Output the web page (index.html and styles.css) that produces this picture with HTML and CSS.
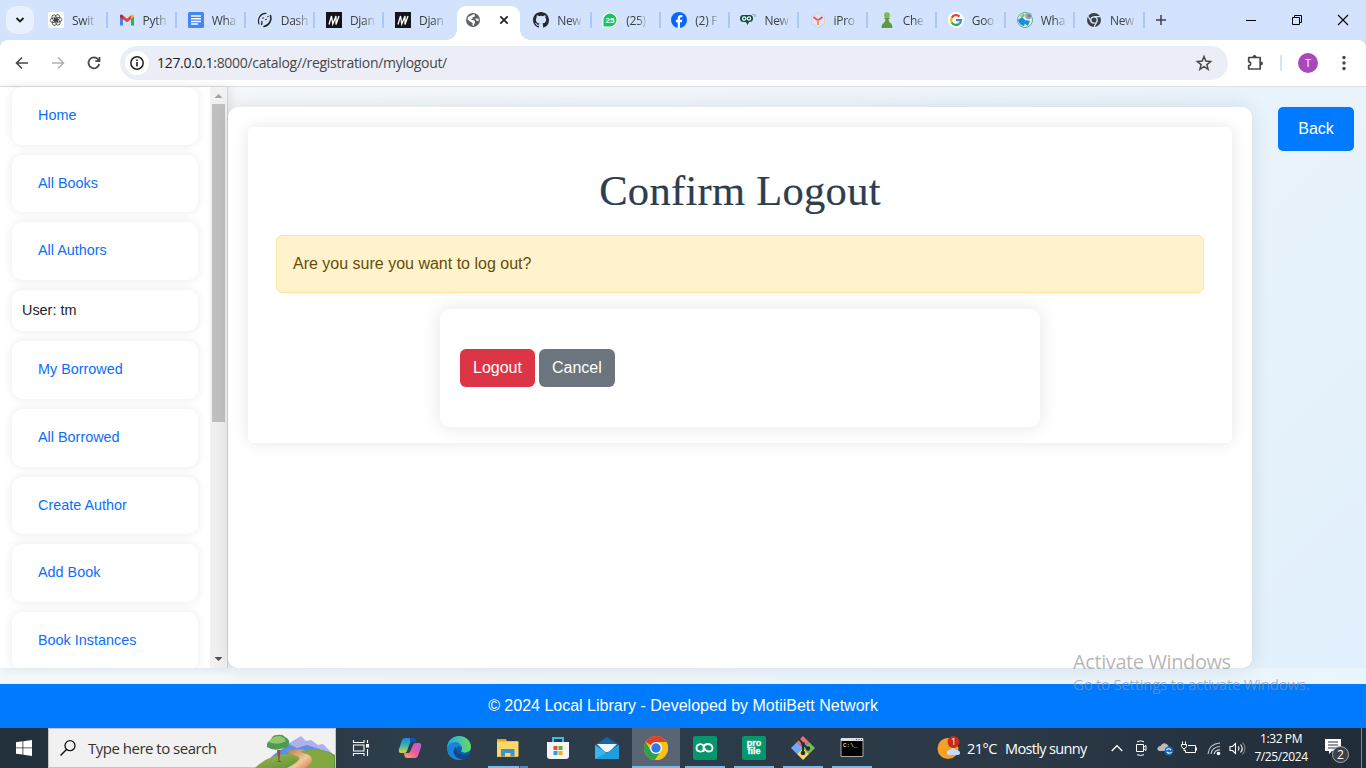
FILE: index.html
```html
<!DOCTYPE html>
<html lang="en">
<head>
<meta charset="utf-8">
<title>Confirm Logout</title>
<link rel="stylesheet" href="styles.css">
</head>
<body>
<div class="screen">
<header class="tabstrip">
  <div class="tab-search"><svg width="10" height="8" viewBox="0 0 10 8"><path d="M1.5 2l3.5 3.5L8.500 2" fill="none" stroke="#1f1f1f" stroke-width="1.9"/></svg></div>
  <div class="tab"><svg class="fav" viewBox="0 0 16 16"><rect width="16" height="16" rx="2" fill="#fff"/><g fill="none" stroke="#333" stroke-width=".75"><ellipse cx="8" cy="5.600" rx="2.300" ry="3.400" transform="rotate(25 8 8)"/><ellipse cx="8" cy="5.600" rx="2.300" ry="3.400" transform="rotate(85 8 8)"/><ellipse cx="8" cy="5.600" rx="2.300" ry="3.400" transform="rotate(145 8 8)"/><ellipse cx="8" cy="5.600" rx="2.300" ry="3.400" transform="rotate(205 8 8)"/><ellipse cx="8" cy="5.600" rx="2.300" ry="3.400" transform="rotate(265 8 8)"/><ellipse cx="8" cy="5.600" rx="2.300" ry="3.400" transform="rotate(325 8 8)"/></g></svg><span>Swit</span></div>
  <div class="tab"><svg class="fav" viewBox="0 0 16 16"><path d="M1 3.500v10h3V7z" fill="#4285f4"/><path d="M12 7v6.500h3v-10z" fill="#34a853"/><path d="M1 4.500Q1 1.500 3.500 3L8 6.700 12 3.300V7L8 10.200 1 5z" fill="#ea4335"/><path d="M12 3.300Q15 1 15 4.500L12 7z" fill="#fbbc04"/><path d="M1 5v-1q0-1 1-1.500L4 4v3.300z" fill="#c5221f"/></svg><span>Pyth</span></div>
  <div class="tab"><svg class="fav" viewBox="0 0 16 16"><rect width="16" height="16" rx="1.500" fill="#4285f4"/><path d="M3 4h10M3 6.700h10M3 9.400h10M3 12.100h7" stroke="#fff" stroke-width="1.500"/></svg><span>Wha</span></div>
  <div class="tab"><svg class="fav" viewBox="0 0 16 16"><g fill="none" stroke="#20272b" stroke-linecap="round"><path d="M2 12C0 6 4 1 9 1.300" stroke-width="1.200"/><path d="M13.500 3.500c1.500 4-1 10-6.500 11" stroke-width="1.600"/><path d="M4.500 12.500q.8-2 .3-3" stroke-width="1.300"/></g><g fill="#20272b"><circle cx="6" cy="6" r=".8"/><circle cx="9" cy="7.500" r=".8"/><circle cx="11" cy="4.500" r=".7"/></g></svg><span>Dash</span></div>
  <div class="tab"><svg class="fav" viewBox="0 0 16 16"><path fill="#15141a" d="M0 0h16v16H0z"/><path d="M3 12.500L5.500 4 6.800 12 10 4v8.500L13 4" fill="none" stroke="#fff" stroke-width="1.300"/></svg><span>Djan</span></div>
  <div class="tab"><svg class="fav" viewBox="0 0 16 16"><path fill="#15141a" d="M0 0h16v16H0z"/><path d="M3 12.500L5.500 4 6.800 12 10 4v8.500L13 4" fill="none" stroke="#fff" stroke-width="1.300"/></svg><span>Djan</span></div>
  <div class="tab active"><svg class="fav" viewBox="0 0 16 16"><circle cx="8" cy="8" r="7" fill="#5f6368"/><path d="M8.500 2.200l1.500.5-.5 2-2 .6v1.500L5.500 8H8l2 1v2l-1 1v1.500H7.500V11L5 9.500 2.500 7.500q0-1.500 1-2.800zM10 6.500l3.500.2.300 2.300-2-.2z" fill="#fff"/></svg><svg class="tab-close" viewBox="0 0 10 10"><path d="M1.300 1.300l7.400 7.400M8.700 1.300L1.300 8.700" stroke="#1f1f1f" stroke-width="1.700"/></svg></div>
  <div class="tab"><svg class="fav" viewBox="0 0 16 16"><path fill="#24292f" d="M8 0C3.580 0 0 3.580 0 8c0 3.540 2.290 6.530 5.470 7.590.4.070.550-.170.550-.380v-1.490c-2.010.370-2.530-.490-2.690-.940-.090-.230-.480-.940-.820-1.130-.280-.150-.680-.520-.010-.530.630-.010 1.080.580 1.230.820.720 1.210 1.870.870 2.330.660.070-.520.280-.870.510-1.070-1.780-.2-3.640-.890-3.640-3.950 0-.870.310-1.590.820-2.150-.080-.2-.360-1.020.080-2.120 0 0 .670-.210 2.200.820a7.400 7.400 0 0 1 4 0c1.530-1.040 2.200-.820 2.200-.820.440 1.100.160 1.920.080 2.120.510.560.820 1.270.820 2.150 0 3.070-1.870 3.750-3.650 3.950.290.250.540.730.540 1.480v2.200c0 .210.150.460.550.380A8 8 0 0 0 16 8c0-4.420-3.580-8-8-8z"/></svg><span>New</span></div>
  <div class="tab"><svg class="fav" viewBox="0 0 16 16"><path d="M.5 15.500V8A7.500 7.500 0 1 1 8 15.500z" fill="#fff"/><path d="M1.500 14.500V8A6.500 6.500 0 1 1 8 14.500z" fill="#16c65b"/><text class="badge-text" x="8" y="11" text-anchor="middle">25</text></svg><span>(25)</span></div>
  <div class="tab"><svg class="fav" viewBox="0 0 16 16"><circle cx="8" cy="8" r="8" fill="#0866ff"/><path d="M6.700 16V10.300H4.900V7.800h1.800V6.400c0-2.400 1.300-3.500 3.200-3.500.700 0 1.300.1 1.500.2v2.100h-1.100c-1 0-1.300.5-1.300 1.300v1.300h2.300l-.4 2.500H9V16z" fill="#fff"/></svg><span>(2) F</span></div>
  <div class="tab"><svg class="fav" viewBox="0 0 16 16"><path d="M3 3h7q3 0 3 3.500T9 10L7.500 13 6 10H4Q0 10 0 6.500T3 3z" fill="#0b4b3c"/><g fill="none" stroke="#fff" stroke-width="1.200"><circle cx="4.200" cy="6.500" r="1.700"/><circle cx="9" cy="6.500" r="1.700"/></g><path d="M12.500 2.500h1.500M15 2v3" stroke="#6ba8a0"/></svg><span>New</span></div>
  <div class="tab"><svg class="fav" viewBox="0 0 16 16"><path d="M8 .7l6.500 3.700v7.400L8 15.400l-6.500-3.600V4.400z" fill="#dce4f5" stroke="#d7d2dc"/><path d="M3.500 5L8 8.500 12.500 5" fill="none" stroke="#e9504d" stroke-width="1.700"/><path d="M8 8v5" stroke="#f09a5c" stroke-width="2"/></svg><span>iPro</span></div>
  <div class="tab"><svg class="fav" viewBox="0 0 16 16"><circle cx="8" cy="3.200" r="2.900" fill="#82b84d"/><path d="M4.700 6h6.600L9.500 7.500q.3 3 3 4.500 1 1 .9 4H2.600q-.1-3 .9-4 2.700-1.500 3-4.500z" fill="#5d9948"/></svg><span>Che</span></div>
  <div class="tab"><svg class="fav" viewBox="0 0 16 16"><circle cx="8" cy="8" r="8" fill="#fff"/><g fill="none" stroke-width="2.300"><path d="M11.500 4.600A4.900 4.900 0 0 0 3.700 5.700" stroke="#ea4335"/><path d="M3.700 5.700a4.900 4.900 0 0 0 0 4.800" stroke="#fbbc05"/><path d="M3.700 10.500a4.900 4.900 0 0 0 7.700 1.100" stroke="#34a853"/><path d="M11.400 11.600A4.900 4.900 0 0 0 12.900 8.200H8" stroke="#4285f4"/></g></svg><span>Goo</span></div>
  <div class="tab"><svg class="fav" viewBox="0 0 16 16"><circle cx="8" cy="8" r="7.500" fill="#e4f2f6" stroke="#6aa98d"/><path d="M1 8l4-3 4 4-2 5Q2 13 1 8zM9 8l4 1-2 5-3-2z" fill="#1792d8"/><path d="M3 4l4-3 1 3-3 2z" fill="#8bc470"/><circle cx="11.500" cy="4" r="3.300" fill="#7fb0cb"/><circle cx="12" cy="4" r="1.400" fill="#db5755"/></svg><span>Wha</span></div>
  <div class="tab"><svg class="fav" viewBox="0 0 16 16"><circle cx="8" cy="8" r="7" fill="#3c4043"/><circle cx="8" cy="8" r="3.200" fill="none" stroke="#d3e3fd" stroke-width="1.300"/><path d="M8 4.700h6.500M5.100 9.600L2 4.200M10.900 9.700L8 15" stroke="#d3e3fd" stroke-width="1.200"/></svg><span>New</span></div>
  <svg class="newtab" viewBox="0 0 12 12"><path d="M6 1v10M1 6h10" stroke="#3c4043" stroke-width="1.500"/></svg>
  <div class="window-buttons">
    <svg width="12" height="12"><path d="M1 6.500h10" stroke="#000"/></svg>
    <svg width="12" height="12"><path d="M1.500 3.500h7v7h-7zM3.500 3V1.500h7v7H9" fill="none" stroke="#000"/></svg>
    <svg width="12" height="12"><path d="M1 1l10 10M11 1L1 11" stroke="#000" stroke-width="1.100"/></svg>
  </div>
</header>
<div class="toolbar">
  <nav class="navs">
    <svg width="16" height="16" viewBox="0 0 16 16"><path d="M14 8H3M8 2.500L2.500 8 8 13.500" fill="none" stroke="#474747" stroke-width="1.600"/></svg>
    <svg width="16" height="16" viewBox="0 0 16 16"><path d="M2 8h11M8 2.500L13.500 8 8 13.500" fill="none" stroke="#b1b3b6" stroke-width="1.600"/></svg>
    <svg width="16" height="16" viewBox="0 0 16 16"><path d="M13.200 9A5.400 5.400 0 1 1 12 4.300L13.500 6M13.500 2v4.200H9.300" fill="none" stroke="#474747" stroke-width="1.700"/></svg>
  </nav>
  <div class="omnibox">
    <div class="site-info"><svg width="16" height="16" viewBox="0 0 16 16"><circle cx="8" cy="8" r="6.200" fill="none" stroke="#1f1f1f" stroke-width="1.500"/><path d="M8 7v4.500M8 4.400v1.700" stroke="#1f1f1f" stroke-width="1.600"/></svg></div>
    <span class="url"><b>127.0.0.1</b>:8000/catalog//registration/mylogout/</span>
    <svg class="star" viewBox="0 0 18 18"><path d="M9 2.500l1.800 4.600 4.800.4-3.700 3.100 1.200 4.700L9 12.700l-4.100 2.600 1.200-4.700-3.700-3.100 4.800-.4z" fill="none" stroke="#474747" stroke-width="1.500"/></svg>
  </div>
  <svg class="puzzle" viewBox="0 0 18 18"><path d="M2.700 3.500h11.500v11.500H2.700v-3.300q2-.3 2-2t-2-2z" fill="none" stroke="#474747" stroke-width="1.700" stroke-linejoin="round"/><path d="M6.500 3q0-2 2-2t2 2zM14.500 7.500q2.500 0 2.500 2t-2.500 2z" fill="#474747"/></svg>
  <i class="bar-divider"></i>
  <div class="avatar">T</div>
  <svg class="kebab" viewBox="0 0 4 16"><g fill="#474747"><circle cx="2" cy="2.500" r="1.700"/><circle cx="2" cy="8" r="1.700"/><circle cx="2" cy="13.500" r="1.700"/></g></svg>
</div>
<div class="page">
  <div class="columns">
    <aside class="sidebar">
      <ul class="menu">
        <li><a>Home</a></li><li><a>All Books</a></li><li><a>All Authors</a></li>
        <li class="user">User: tm</li>
        <li><a>My Borrowed</a></li><li><a>All Borrowed</a></li><li><a>Create Author</a></li><li><a>Add Book</a></li><li><a>Book Instances</a></li>
      </ul>
      <div class="scrollbar"><svg width="17" height="17"><path d="M4.500 11h8L8.500 7z" fill="#a3a3a3"/></svg><i></i><svg width="17" height="17"><path d="M4.500 6h8L8.500 10z" fill="#505050"/></svg></div>
    </aside>
    <main class="content">
      <section class="panel">
        <h1>Confirm Logout</h1>
        <div class="alert">Are you sure you want to log out?</div>
        <form class="actions"><a class="btn danger">Logout</a><a class="btn secondary">Cancel</a></form>
      </section>
    </main>
    <a class="back">Back</a>
  </div>
  <footer>© 2024 Local Library - Developed by MotiiBett Network</footer>
</div>
<div class="taskbar">
  <div class="start"><svg width="16" height="16" viewBox="0 0 16 16"><path d="M0 2.200l6.500-.9v6.200H0zM7.300 1.200L16 0v7.500H7.300zM0 8.300h6.500v6.300L0 13.700zM7.300 8.300H16V16l-8.700-1.200z" fill="#fff"/></svg></div>
  <div class="search">
    <svg class="lens" viewBox="0 0 18 18"><circle cx="11" cy="6.700" r="5" fill="none" stroke="#111" stroke-width="1.300"/><path d="M7.500 10.500L1.500 16.500" stroke="#111" stroke-width="1.400"/></svg>
    <span>Type here to search</span>
    <svg class="landscape" viewBox="0 0 80 39"><defs><linearGradient id="hill" x1="0" y1="0" x2="1" y2="1"><stop offset="0" stop-color="#a9bd4d"/><stop offset="1" stop-color="#4a8732"/></linearGradient><linearGradient id="road" x1="0" y1="0" x2="1" y2="1"><stop offset="0" stop-color="#b87a50"/><stop offset=".6" stop-color="#f3c799"/><stop offset="1" stop-color="#c87944"/></linearGradient></defs><path d="M18 26L36 13l10-6 5 5 5-1 7 5 5-1 12 12v13H12z" fill="#b0b1e8"/><path d="M16 28L34 15l8 4 10-3 12 4 10 3 6 4v13H16z" fill="#5d8fe3"/><path d="M0 39Q14 25 34 25l20-4q16-1 26 5v14z" fill="url(#hill)"/><path d="M50 21q20-2 29 6v13H50z" fill="#81a83f"/><path d="M32 39q14-7 12-11-12-4-12-6 8-3 18-1-9 2 2 4 11 6-2 14z" fill="url(#road)"/><path d="M22 21l1.500 11-2 1h5l-2-2 1-10z" fill="#935333"/><path d="M12 18q-1-5 4-7 1-5 6-5 6-1 8 2 5 2 4 7-1 5-6 4-8 4-16-1z" fill="#4f9b54"/><path d="M14 13q2-5 9-6 6 0 8 5-8 5-17 1z" fill="#91c66b"/></svg>
  </div>
  <div class="apps">
    <div class="app"><svg class="g18" viewBox="0 0 18 18"><path d="M2.500 1v3M2.500 14v3M13 1v3M13 14v3M2 3.500h11.500M2 14.500h11.500M2.500 6h10.500v6H2.500zM16.500 1v3M16.500 10v7" fill="none" stroke="#fff" stroke-width="1.100"/><path d="M15 5h3v3.500h-3z" fill="#fff"/></svg></div>
    <div class="app"><svg viewBox="0 0 24 24"><defs><linearGradient id="cpa" x1="0" y1="0" x2="0" y2="1"><stop offset="0" stop-color="#1b85dc"/><stop offset=".5" stop-color="#34b5ad"/><stop offset="1" stop-color="#e9cf39"/></linearGradient><linearGradient id="cpb" x1="1" y1="0" x2="0" y2="1"><stop offset="0" stop-color="#a962e7"/><stop offset=".5" stop-color="#ea5c99"/><stop offset="1" stop-color="#ffa45e"/></linearGradient></defs><path d="M7 2h8q2 0 2.500 2L18 6h-4q-2 0-2.500 2L9 15q-.5 2-3 2H3q-3 0-2-4L4 4q1-2 3-2z" fill="url(#cpa)"/><path d="M17 22H9q-2 0-2.500-2L6 17h4q2 0 2.500-2L15 9q.5-2 3-2h3q3 0 2 4l-3 9q-1 2-3 2z" fill="url(#cpb)"/><path d="M12 2h3q2 0 2.500 2L18 6h-4q-1 0-2 1z" fill="#154bc2"/></svg></div>
    <div class="app"><svg viewBox="0 0 24 24"><defs><linearGradient id="edg"><stop stop-color="#24a8e8"/><stop offset="1" stop-color="#67db65"/></linearGradient></defs><circle cx="12" cy="12" r="12" fill="#0e58ad"/><path d="M0 11C1 4 6 0 12 0c8 0 12 6 12 11 0 6-8 7-10 4 2-2 1-7-4-7-5 0-8 3-10 3z" fill="url(#edg)"/><path d="M0 12q2-6 9-6 5 1 6 6-2-2-4-2-5 4 1 10 5 3 9-1-4 5-9 5C4 24 0 18 0 12z" fill="#1b83d5"/><path d="M9 10q-5 6 0 11 4 3 8 2 5-1 6-5-7 3-12-1-3-3-2-7z" fill="#124787"/></svg></div>
    <div class="app explorer"><svg viewBox="0 0 24 24"><path d="M1 3h9l1 2h11v16H1z" fill="#e7a621"/><path d="M1 5.500h21.500V20.500H1z" fill="#ffd767"/><path d="M5 13h13.500v7.500h-4V17H9v3.500H5z" fill="#3894d8"/></svg></div>
    <div class="app"><svg viewBox="0 0 24 24"><path d="M7 7V2h10v5" fill="none" stroke="#36bce7" stroke-width="2"/><path d="M1 6h22v14q0 3-3 3H4q-3 0-3-3z" fill="#f4f4f6"/><path d="M7.500 10h4v4h-4z" fill="#e45032"/><path d="M12.500 10h4v4h-4z" fill="#70aa27"/><path d="M7.500 15h4v4h-4z" fill="#22a5dc"/><path d="M12.500 15h4v4h-4z" fill="#f2ae18"/></svg></div>
    <div class="app"><svg viewBox="0 0 24 24"><path d="M0 9L12 1l12 8v5H0z" fill="#1466ae"/><path d="M2 8h20l-8 8h-4z" fill="#f1f4f9"/><path d="M0 9l12 8 12-8v14H0z" fill="#35b7ee"/><path d="M0 23l24-13v13z" fill="#209ddb"/></svg></div>
    <div class="app running current"><svg viewBox="0 0 24 24"><circle cx="12" cy="12" r="12" fill="#fbc116"/><path d="M12 12L1.600 6A12 12 0 0 1 22.400 6H12z" fill="#de4132"/><path d="M1.600 6A12 12 0 0 0 11 24l6-9-5-3-5 3z" fill="#2e9f4b"/><path d="M12 6h10.400A12 12 0 0 1 11 24l6-9z" fill="#fbc116"/><circle cx="12" cy="12" r="6" fill="#fff"/><circle cx="12" cy="12" r="4.700" fill="#2d7be8"/></svg></div>
    <div class="app running"><svg viewBox="0 0 24 24"><rect width="24" height="24" rx="2" fill="#06966d"/><path d="M10.500 16V9.500C8 7 3.500 8 3.500 12s5 4.500 7 2m0-2.500q1-3.500 4-3.500 4.500 0 5 4 0 3.500-3.500 3.500-3 0-5.500-4" fill="none" stroke="#fff" stroke-width="1.800"/></svg></div>
    <div class="app running"><svg viewBox="0 0 24 24"><rect width="24" height="24" rx="2" fill="#06966d"/><text class="profile-text" x="12" y="10" text-anchor="middle">pro</text><text class="profile-text" x="12" y="18" text-anchor="middle">file</text></svg></div>
    <div class="app running"><svg viewBox="0 0 24 24"><path d="M12 0l6 6-6 6-6-6z" fill="#ed6f70"/><path d="M6 6l6 6-6 6-6-6z" fill="#75a9f5"/><path d="M18 6l6 6-6 6-6-6z" fill="#76bd55"/><path d="M12 12l6 6-6 6-6-6z" fill="#f4d969"/><path d="M8 3l4 5v9M12 8l5 5" stroke="#27313b" stroke-width="2" fill="none"/><g fill="#27313b"><circle cx="12" cy="8" r="2"/><circle cx="12" cy="17" r="2.300"/><circle cx="17" cy="12.500" r="2.200"/></g></svg></div>
    <div class="app running"><svg viewBox="0 0 24 24"><path d="M1 2.500h22v18H1z" fill="#000" stroke="#aaa"/><path d="M1 2h22v3H1z" fill="#ddd"/><path d="M16 3.500h1M18.500 3.500h1M21 3.500h1" stroke="#444"/><text class="cmd-text" x="3" y="11">C:\_</text></svg></div>
  </div>
  <div class="tray">
    <svg class="weather" viewBox="0 0 24 24"><circle cx="11" cy="12.500" r="10.500" fill="#f4a128"/><path d="M10 18q-1-4 3-4 3-4 6 0 4 0 4 3 0 2-3 2h-8z" fill="#c2ddfb"/><circle cx="16.500" cy="6" r="6" fill="#c42b1c"/><text class="alert-count" x="16.500" y="9.300" text-anchor="middle">1</text></svg>
    <span class="temp">21°C</span><span class="sky">Mostly sunny</span>
    <svg class="caret" width="12" height="8"><path d="M.7 7L6 1.700 11.300 7" fill="none" stroke="#fff" stroke-width="1.300"/></svg>
    <svg class="meet" width="12" height="16"><path d="M1.500 4.500h7v7h-7zM9 7l2-1.500v5L9 9M2 1.800q4-2 7 0M2 14.700q4 1.500 7 0" fill="none" stroke="#fff"/></svg>
    <svg class="cloud" width="17" height="16"><path d="M3 11q-3 0-2.500-3 1-2 3-2 2-4 6-2 2 1 2 3 3 0 3 4z" fill="#b8bbbd"/><circle cx="12" cy="11" r="4.500" fill="#1769bd"/><path d="M9.500 10q2-2.500 4.500 0M14.500 12q-2 2.500-4.500 0" fill="none" stroke="#fff" stroke-width="1.200"/></svg>
    <svg class="battery" width="17" height="14"><path d="M7 4.500h7.500v7h-8M15.500 6.500v3M1.500 .5v3M4.500 .5v3M.5 3.500h5v2l-1.500 2H2L.5 5.500zM3 7.500v2h1.500v2h3" fill="none" stroke="#fff"/></svg>
    <svg class="wifi" width="14" height="15"><g fill="none" stroke="#c4c9cd" stroke-width="1.200"><path d="M1 13Q2 3 13 2M4 13q1-7 9-7.500M7 13q1-4 6-4.200"/></g><circle cx="11.500" cy="12.500" r="1.800" fill="#fff"/></svg>
    <svg class="volume" width="17" height="15"><path d="M1 5.500h2.500l3-3v10l-3-3H1zM9 5.500q2 2 0 4M11.500 3.500q3.500 4 0 8" fill="none" stroke="#fff" stroke-width="1.100"/><path d="M13.500 1.500q5 6 0 12" fill="none" stroke="#8b949c"/></svg>
    <div class="clock"><span>1:32 PM</span><span>7/25/2024</span></div>
    <svg class="notice" viewBox="0 0 25 26"><path d="M0 2h16v12H7l-3 3v-3H0z" fill="#fff"/><path d="M3 5h10M3 8h10M3 11h10" stroke="#26323d"/><circle cx="15.500" cy="17.500" r="8" fill="#3c4146" stroke="#a5a9ad"/><text class="notice-count" x="15.500" y="21.500" text-anchor="middle">2</text></svg>
    <i class="desktop-edge"></i>
  </div>
</div>
<div class="watermark"><p>Activate Windows</p><span>Go to Settings to activate Windows.</span></div>
</div>
</body>
</html>
```
FILE: styles.css
```css
* { box-sizing: border-box; }
body { margin: 0; font-family: Arial, "Liberation Sans", sans-serif; overflow: hidden; }
svg { display: block; flex: none; }
.screen { position: relative; width: 1366px; height: 768px; display: flex; flex-direction: column; overflow: hidden; background: #d3e3fd; }
.tabstrip, .toolbar, .taskbar, .watermark { font-family: "Segoe UI", "Open Sans", "Noto Sans", sans-serif; }

.tabstrip { height: 40px; flex: none; display: flex; align-items: center; background: #d3e3fd; }
.tab-search { width: 28px; height: 28px; margin: 0 4px 0 6px; border-radius: 10px; background: #e9f1fe; display: grid; place-items: center; flex: none; }
.tab { width: 69.1px; height: 40px; flex: none; display: flex; align-items: center; padding-left: 11.500px; position: relative; }
.tab-search + .tab { padding-left: 10px; }
.tab::after { content: ""; position: absolute; right: -1px; top: 12px; width: 2px; height: 16px; background: #a8c7fa; }
.tab span { margin-left: 8px; white-space: nowrap; font-size: 12px; letter-spacing: -.3px; color: #3c4043; mask-image: linear-gradient(to right, #000 55%, rgba(0,0,0,.2)); }
.fav { width: 16px; height: 16px; }
.tab.active { z-index: 1; padding-left: 12px; }
.tab.active::before { content: ""; position: absolute; z-index: -1; left: 4px; top: 6px; width: 63px; height: 34px; background: #fff; border-radius: 9px 9px 0 0; }
.tab.active::after { z-index: -1; left: -6px; top: 30px; width: 83px; height: 10px; background: radial-gradient(circle at 0 0, #d3e3fd 9.5px, #fff 10px) left / 10px 10px no-repeat, radial-gradient(circle at 100% 0, #d3e3fd 9.5px, #fff 10px) right / 10px 10px no-repeat; }
.tab-close { width: 10px; height: 10px; margin-left: 18px; }
.tab:has(+ .active)::after { display: none; }
.newtab { width: 12px; height: 12px; margin-left: 11px; }
.window-buttons { margin-left: auto; margin-right: 17px; display: flex; gap: 34px; }
.badge-text { font: bold 8px "Liberation Sans", sans-serif; fill: #fff; }

.toolbar { height: 47px; flex: none; display: flex; align-items: center; background: #fff; border-radius: 8px 8px 0 0; border-bottom: 1px solid #dedfe0; padding: 0 20px 0 14px; }
.navs { display: flex; gap: 20px; }
.omnibox { margin-left: 18px; width: 1108px; height: 34px; border-radius: 17px; background: #ebeef7; display: flex; align-items: center; padding: 0 15px 0 5px; }
.site-info { width: 24px; height: 24px; border-radius: 50%; background: #fff; display: grid; place-items: center; }
.url { margin-left: 8px; font-size: 14px; color: #474747; letter-spacing: -.31px; padding-bottom: 1px; }
.url b { font-weight: 400; color: #1f1f1f; }
.star { width: 18px; height: 18px; margin-left: auto; }
.puzzle { width: 18px; height: 18px; margin-left: 18px; }
.bar-divider { width: 2px; height: 16px; background: #d3e3fd; margin-left: 16px; }
.avatar { width: 20px; height: 20px; border-radius: 50%; background: #ab47bc; color: #fff; font-size: 11px; line-height: 20px; text-align: center; margin-left: 16px; }
.kebab { width: 4px; height: 16px; margin-left: auto; }

.page { height: 641px; flex: none; display: flex; flex-direction: column; background: linear-gradient(135deg, #f8f9fa, #e9f4fd); }
.columns { height: 581px; display: flex; background: linear-gradient(135deg, #f8f9fa, #e1f0fc); }
.sidebar { width: 228px; display: flex; background: #fff; border-right: 1px solid #d1d3d5; box-shadow: 2px 0 10px rgba(0,0,0,.1); overflow: hidden; }
.menu { list-style: none; width: 210px; margin: 0; padding: 0 12px; font-size: 14.4px; }
.menu li { height: 57.6px; margin-bottom: 10.1px; border-radius: 10px; background: #fff; box-shadow: 0 0 10px rgba(0,0,0,.09); padding-left: 26px; line-height: 56.5px; color: #212529; }
.menu a { color: #0d6efd; }
.menu .user { height: 41.2px; line-height: 41px; padding-left: 10px; }
.scrollbar { width: 17px; background: #f1f1f1; display: flex; flex-direction: column; }
.scrollbar i { width: 13px; height: 318px; margin: 0 2px auto; background: #c1c1c1; }
.content { width: 1024px; margin-top: 20px; padding: 20px; border-radius: 10px; background: #fff; box-shadow: 0 0 20px rgba(0,0,0,.1); }
.panel { height: 316px; border-radius: 5px; padding: 40px 28px 0; box-shadow: 0 0 15px rgba(0,0,0,.1); }
.panel h1 { margin: 0 0 20px; font: 400 42.500px/48px Georgia, "Liberation Serif", serif; letter-spacing: .3px; -webkit-text-stroke: .2px #2c3e50; color: #2c3e50; text-align: center; }
.alert { height: 58px; border: 1px solid #ffe69c; border-radius: 6px; background: #fff3cd; color: #664d03; font-size: 16px; line-height: 56px; padding-left: 16px; }
.actions { width: 600px; height: 118px; margin: 16px auto 0; padding: 40px 20px; display: flex; gap: 4px; border-radius: 10px; box-shadow: 0 0 20px rgba(0,0,0,.1); }
.btn { height: 38px; padding: 0 13px; line-height: 37px; border-radius: 6px; color: #fff; font-size: 16px; }
.danger { background: #dc3545; }
.secondary { background: #6c757d; }
.back { width: 76px; height: 44px; margin: 20px 0 0 26px; border-radius: 5px; background: #007bff; color: #fff; font-size: 16px; line-height: 43px; text-align: center; }
footer { height: 44px; margin-top: 16px; background: #007bff; color: #fff; font-size: 16px; line-height: 43px; text-align: center; position: relative; }

.taskbar { height: 40px; flex: none; display: flex; background: linear-gradient(90deg, #22303b, #2e3d4a 30%, #2b3947 75%, #202c37); color: #fff; }
.start { width: 48px; display: grid; place-items: center; }
.search { width: 288px; display: flex; align-items: center; background: #f1f1f1; border: 1px solid #c5c5c5; color: #333; font-size: 15px; padding-left: 10px; }
.lens { width: 18px; height: 18px; }
.search span { margin-left: 11px; letter-spacing: -.5px; white-space: nowrap; }
.landscape { width: 80px; height: 39px; margin-left: auto; }
.apps { display: flex; margin-left: .6px; }
.app { width: 49.1px; display: grid; place-items: center; position: relative; }
.app svg { width: 24px; height: 24px; }
.app .g18 { width: 18px; height: 18px; margin-right: 3px; }
.running::after, .explorer::after { content: ""; position: absolute; bottom: 0; left: 4.500px; width: 40px; height: 2px; background: #76b9ed; }
.explorer::after { background: linear-gradient(90deg, #76b9ed 31px, #3c536a 31px 32px, #5385b0 32px); }
.current { background: linear-gradient(#596572, #596572) center / 48px 100% no-repeat; }
.current::after { left: .5px; width: 48px; }
.profile-text { font: bold 9px "Liberation Sans", sans-serif; fill: #fff; stroke: #fff; stroke-width: .3px; }
.cmd-text { font: 6px "Liberation Mono", monospace; fill: #fff; }
.tray { margin-left: auto; display: flex; align-items: center; width: 429px; font-size: 14.500px; white-space: nowrap; }
.weather { width: 24px; height: 24px; }
.temp { width: 30px; margin-left: 6px; letter-spacing: -.55px; }
.sky { width: 82px; margin-left: 8px; letter-spacing: -.65px; }
.caret { margin-left: 24px; }
.meet { margin-left: 12px; }
.cloud { margin-left: 10px; }
.battery { margin-left: 7px; }
.wifi { margin-left: 9px; }
.volume { margin-left: 8px; }
.clock { width: 54px; margin-left: 8px; display: flex; flex-direction: column; align-items: center; font-size: 12px; line-height: 18px; letter-spacing: -.4px; }
.notice { width: 25px; height: 26px; margin: 4px 0 0 17px; }
.desktop-edge { width: 1px; height: 40px; margin-left: auto; margin-right: 4px; background: #7c858d; }
.alert-count { font-size: 9px; fill: #fff; }
.notice-count { font-size: 12px; fill: #fff; }
.watermark { position: absolute; left: 1073px; top: 649px; color: rgba(145,145,145,.66); white-space: nowrap; }
.watermark p { margin: 0; font-size: 20px; line-height: 26px; letter-spacing: -.4px; }
.watermark span { display: block; font-size: 15px; line-height: 19px; letter-spacing: -.27px; }
```
